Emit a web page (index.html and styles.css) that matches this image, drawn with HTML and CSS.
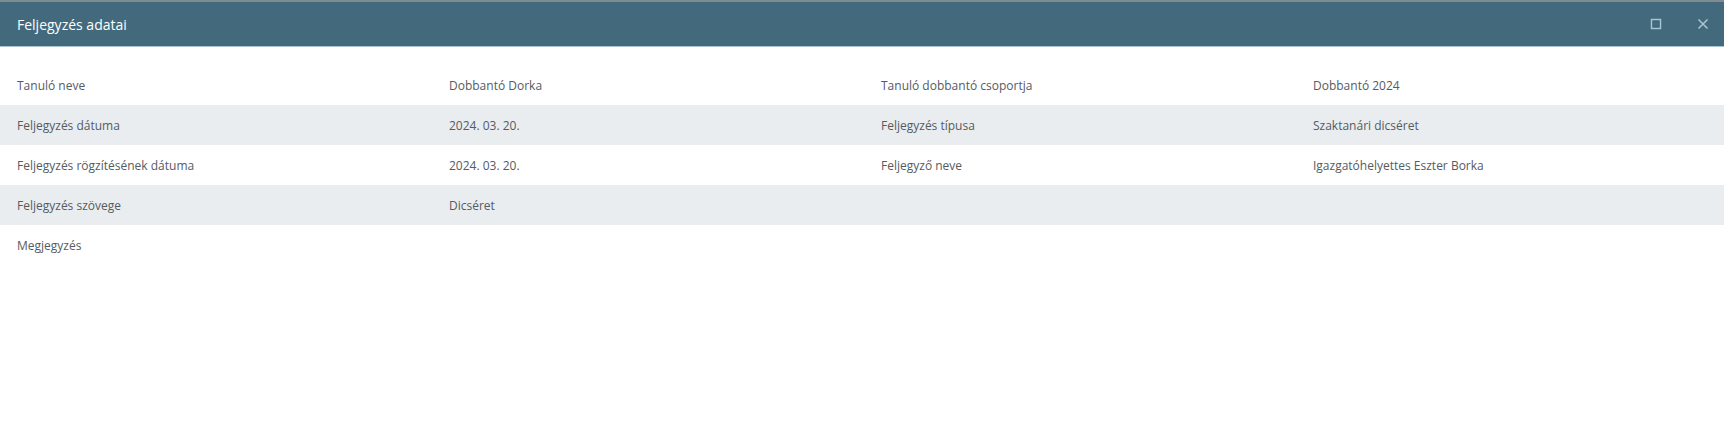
FILE: index.html
```html
<!DOCTYPE html>
<html lang="hu">
<head>
  <meta charset="UTF-8">
  <title>Feljegyzés adatai</title>
  <link rel="stylesheet" href="styles.css">
</head>
<body>
<div class="backdrop-strip"></div>
<div class="window">
  <header class="window-header">
    <span class="window-title">Feljegyzés adatai</span>
    <div class="window-actions">
      <button class="icon-btn" title="Teljes méret">
        <svg width="12" height="12" viewBox="0 0 12 12"><rect x="1.5" y="1.5" width="9" height="9" fill="none" stroke="currentColor" stroke-width="1.4"/></svg>
      </button>
      <button class="icon-btn" title="Bezárás">
        <svg width="12" height="12" viewBox="0 0 12 12"><path d="M1.5 1.5 L10.5 10.5 M10.5 1.5 L1.5 10.5" stroke="currentColor" stroke-width="1.5" fill="none"/></svg>
      </button>
    </div>
  </header>
  <div class="details">
    <div class="row">
      <div class="cell">Tanuló neve</div>
      <div class="cell">Dobbantó Dorka</div>
      <div class="cell">Tanuló dobbantó csoportja</div>
      <div class="cell">Dobbantó 2024</div>
    </div>
    <div class="row">
      <div class="cell">Feljegyzés dátuma</div>
      <div class="cell">2024. 03. 20.</div>
      <div class="cell">Feljegyzés típusa</div>
      <div class="cell">Szaktanári dicséret</div>
    </div>
    <div class="row">
      <div class="cell">Feljegyzés rögzítésének dátuma</div>
      <div class="cell">2024. 03. 20.</div>
      <div class="cell">Feljegyző neve</div>
      <div class="cell">Igazgatóhelyettes Eszter Borka</div>
    </div>
    <div class="row">
      <div class="cell">Feljegyzés szövege</div>
      <div class="cell">Dicséret</div>
      <div class="cell"></div>
      <div class="cell"></div>
    </div>
    <div class="row">
      <div class="cell">Megjegyzés</div>
      <div class="cell"></div>
      <div class="cell"></div>
      <div class="cell"></div>
    </div>
  </div>
</div>
</body>
</html>
```

FILE: styles.css
```css
body {
  margin: 0;
  padding: 0;
  font-family: "Open Sans", Arial, sans-serif;
  background: #fff;
  overflow: hidden;
}
.backdrop-strip {
  height: 2px;
  background: #7f8b91;
}
.window {
  overflow: hidden;
}
.window-header {
  height: 45px;
  background: #436a7c;
  color: #fff;
  display: flex;
  align-items: center;
  justify-content: space-between;
  padding: 0 11px 0 17px;
  border-bottom: 1px solid #a9c3cf;
  box-sizing: border-box;
}
.window-title {
  font-size: 14px;
}
.window-actions {
  display: flex;
  gap: 27px;
}
.icon-btn {
  background: none;
  border: none;
  padding: 4px;
  color: #a9c6d3;
  cursor: pointer;
  display: flex;
}
.details {
  margin-top: 18px;
}
.row {
  display: grid;
  grid-template-columns: repeat(4, 432px);
  height: 40px;
  align-items: center;
  font-size: 12px;
  color: #555b5f;
}
.row:nth-child(even) {
  background: #e9edf0;
}
.cell {
  padding-left: 17px;
}
```
